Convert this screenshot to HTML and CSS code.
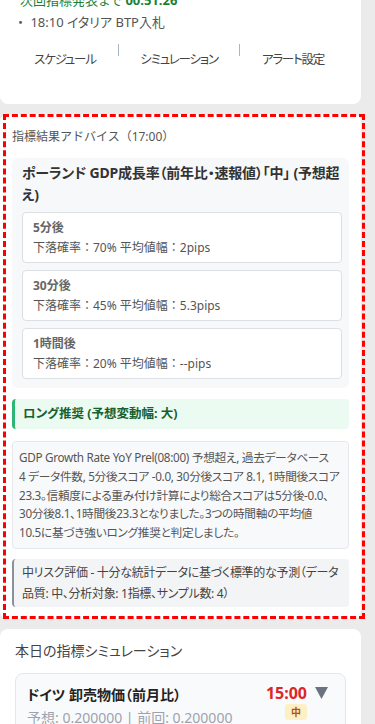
FILE: index.html
```html
<!DOCTYPE html>
<html lang="ja">
<head>
<meta charset="utf-8">
<link rel="stylesheet" href="styles.css">
</head>
<body>
<div class="page">
  <section class="card top-card">
    <div class="countdown">次回指標発表まで <b>00:51:26</b></div>
    <div class="next-item"><span class="bullet">・</span> 18:10 イタリア BTP入札</div>
    <nav class="nav">
      <span class="nav-item">スケジュール</span>
      <span class="sep"></span>
      <span class="nav-item">シミュレーション</span>
      <span class="sep"></span>
      <span class="nav-item">アラート設定</span>
    </nav>
  </section>

  <section class="card advice">
    <div class="advice-title">指標結果アドバイス（17:00）</div>
    <div class="panel">
      <div class="panel-title">ポーランド GDP成長率（前年比・速報値）「中」 (予想超<br>え)</div>
      <div class="stat">
        <div class="stat-label">5分後</div>
        <div class="stat-value">下落確率：70% 平均値幅：2pips</div>
      </div>
      <div class="stat">
        <div class="stat-label">30分後</div>
        <div class="stat-value">下落確率：45% 平均値幅：5.3pips</div>
      </div>
      <div class="stat">
        <div class="stat-label">1時間後</div>
        <div class="stat-value">下落確率：20% 平均値幅：--pips</div>
      </div>
    </div>
    <div class="reco">ロング推奨 (予想変動幅: 大)</div>
    <div class="desc">GDP Growth Rate YoY Prel(08:00) 予想超え, 過去データベース<br>4 データ件数, 5分後スコア -0.0, 30分後スコア 8.1, 1時間後スコア<br>23.3。信頼度による重み付け計算により総合スコアは5分後-0.0、<br>30分後8.1、1時間後23.3となりました。3つの時間軸の平均値<br>10.5に基づき強いロング推奨と判定しました。</div>
    <div class="risk">中リスク評価 - 十分な統計データに基づく標準的な予測（データ<br>品質: 中、分析対象: 1指標、サンプル数: 4）</div>
  </section>

  <section class="card sim">
    <div class="sim-title">本日の指標シミュレーション</div>
    <div class="event">
      <div class="event-main">
        <div class="event-name">ドイツ 卸売物価（前月比）</div>
        <div class="event-meta">予想: 0.200000 | 前回: 0.200000</div>
      </div>
      <div class="event-side">
        <div class="event-time-row">
          <span class="event-time">15:00</span>
          <svg class="caret" width="13" height="12" viewBox="0 0 13 12"><path d="M0 0 H13 L6.5 12 Z" fill="#6b7280"/></svg>
        </div>
        <span class="badge">中</span>
      </div>
    </div>
  </section>
</div>
</body>
</html>
```

FILE: styles.css
```css
* { box-sizing: border-box; }
html, body { margin: 0; padding: 0; }
body {
  background: #ebebeb;
  font-family: "Noto Sans", "Noto Sans CJK JP", sans-serif;
  font-feature-settings: "palt";
  color: #555;
  overflow: hidden;
}
.page {
  width: 361px;
  display: flex;
  flex-direction: column;
  gap: 10px;
  margin-top: -30px;
}
.card {
  background: #fff;
  border-radius: 8px;
}
.top-card {
  padding: 20px 12px 34px;
}
.countdown {
  font-size: 13px;
  line-height: 20px;
  color: #1a7f37;
  padding-left: 8px;
}
.countdown b { font-weight: 700; }
.next-item {
  margin-top: 2px;
  font-size: 13px;
  line-height: 20px;
  color: #555;
  padding-left: 2px;
}
.bullet { font-feature-settings: normal; }
.nav {
  margin-top: 12px;
  display: grid;
  grid-template-columns: 106px 1px 120px 1px 106px;
  align-items: start;
}
.nav-item {
  padding-top: 6px;
  text-align: center;
  font-size: 12.5px;
  letter-spacing: -1.2px;
  line-height: 20px;
  color: #444;
}
.sep {
  width: 1px;
  height: 12px;
  background: #a9b4c4;
}
.advice {
  position: relative;
  padding: 13px 12px 12px;
}
.advice::after {
  content: "";
  position: absolute;
  top: 0; bottom: 0; left: 3px; right: -4px;
  border: 3px dashed #ff0000;
  pointer-events: none;
}
.advice-title {
  font-size: 12px;
  font-feature-settings: normal;
  line-height: 20px;
  color: #555;
}
.panel {
  margin-top: 11px;
  background: #f7f8fa;
  border-radius: 6px;
  padding: 4px 7px 9px 10px;
  display: flex;
  flex-direction: column;
  gap: 7px;
}
.panel-title {
  font-size: 14px;
  font-weight: 700;
  letter-spacing: -0.2px;
  line-height: 22px;
  color: #333;
  margin-bottom: -1px;
}
.stat {
  background: #fff;
  border: 1px solid #dcdfe4;
  border-radius: 4px;
  padding: 5px 10px 4px;
}
.stat-label {
  font-size: 12px;
  font-weight: 700;
  line-height: 20px;
  color: #666;
}
.stat-value {
  font-size: 12px;
  font-feature-settings: normal;
  line-height: 20px;
  color: #555;
}
.reco {
  margin-top: 11px;
  background: #ecfbf2;
  border-left: 3px solid #2bb673;
  border-radius: 4px;
  padding: 5px 8px;
  font-size: 12.5px;
  font-weight: 700;
  line-height: 20px;
  color: #17612f;
}
.desc {
  margin-top: 12px;
  background: #f8f9fa;
  border: 1px solid #e6e8eb;
  border-radius: 4px;
  padding: 6px 1px 6px 6px;
  font-size: 11.7px;
  letter-spacing: -0.3px;
  line-height: 18.8px;
  color: #555;
}
.risk {
  margin-top: 10px;
  background: #f3f4f6;
  border-left: 2px solid #8a909c;
  border-radius: 4px;
  padding: 3px 4px 3px 8px;
  font-size: 12px;
  letter-spacing: -0.3px;
  line-height: 21px;
  color: #444;
}
.sim {
  padding: 12px 15px 20px;
}
.sim-title {
  font-size: 14px;
  line-height: 20px;
  color: #444;
}
.event {
  margin-top: 12px;
  background: #f9fafb;
  border: 1px solid #e5e7eb;
  border-radius: 8px;
  padding: 10px 17px 10px 11px;
  display: flex;
  justify-content: space-between;
  align-items: flex-start;
}
.event-name {
  font-size: 14px;
  font-weight: 700;
  line-height: 22px;
  color: #222;
}
.event-meta {
  margin-top: 2px;
  font-size: 14px;
  line-height: 20px;
  color: #9ca3af;
}
.event-side {
  display: flex;
  flex-direction: column;
  align-items: flex-end;
  gap: 2px;
}
.event-time-row {
  display: flex;
  align-items: center;
  gap: 8px;
}
.event-time {
  font-size: 16px;
  font-weight: 700;
  line-height: 18px;
  color: #dc2626;
}
.caret { display: block; }
.badge {
  margin-right: 21px;
  background: #fdf0c4;
  color: #b45309;
  font-size: 10px;
  font-weight: 700;
  line-height: 16px;
  padding: 0 6px;
  border-radius: 3px;
}
```
